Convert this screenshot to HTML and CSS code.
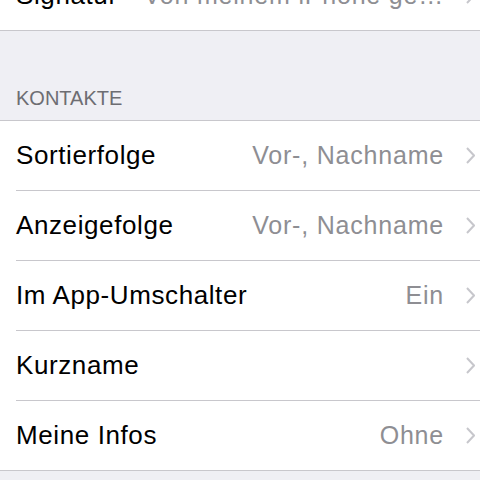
FILE: index.html
```html
<!DOCTYPE html>
<html lang="de">
<head>
  <meta charset="UTF-8">
  <title>Mail, Kontakte, Kalender</title>
  <meta name="viewport" content="width=device-width, initial-scale=1.0">
  <link rel="stylesheet" href="styles.css">
</head>
<body>
  <!-- Ende der Mail-Gruppe -->
  <div class="gruppe gruppe-oben">
    <div class="zelle">
      <div class="zelle-inhalt">
        <span class="titel">Signatur</span>
        <span class="wert">Von meinem iPhone ge…</span>
        <svg class="pfeil" width="9" height="17" viewBox="0 0 9 17"><polyline points="1,1 8,8.5 1,16" /></svg>
      </div>
    </div>
  </div>

  <div class="kopf">KONTAKTE</div>

  <div class="gruppe">
    <div class="zelle">
      <div class="zelle-inhalt">
        <span class="titel">Sortierfolge</span>
        <span class="wert">Vor-, Nachname</span>
        <svg class="pfeil" width="9" height="17" viewBox="0 0 9 17"><polyline points="1,1 8,8.5 1,16" /></svg>
      </div>
    </div>
    <div class="zelle">
      <div class="zelle-inhalt">
        <span class="titel">Anzeigefolge</span>
        <span class="wert">Vor-, Nachname</span>
        <svg class="pfeil" width="9" height="17" viewBox="0 0 9 17"><polyline points="1,1 8,8.5 1,16" /></svg>
      </div>
    </div>
    <div class="zelle">
      <div class="zelle-inhalt">
        <span class="titel">Im App-Umschalter</span>
        <span class="wert">Ein</span>
        <svg class="pfeil" width="9" height="17" viewBox="0 0 9 17"><polyline points="1,1 8,8.5 1,16" /></svg>
      </div>
    </div>
    <div class="zelle">
      <div class="zelle-inhalt">
        <span class="titel">Kurzname</span>
        <span class="wert"></span>
        <svg class="pfeil" width="9" height="17" viewBox="0 0 9 17"><polyline points="1,1 8,8.5 1,16" /></svg>
      </div>
    </div>
    <div class="zelle">
      <div class="zelle-inhalt">
        <span class="titel">Meine Infos</span>
        <span class="wert">Ohne</span>
        <svg class="pfeil" width="9" height="17" viewBox="0 0 9 17"><polyline points="1,1 8,8.5 1,16" /></svg>
      </div>
    </div>
  </div>
</body>
</html>
```

FILE: styles.css
```css
* {
  box-sizing: border-box;
  margin: 0;
  padding: 0;
}

body {
  font-family: 'Liberation Sans', Arial, sans-serif;
  background: #efeff4;
  color: #000;
  height: 480px;
  overflow: hidden;
}

.gruppe {
  background: #fff;
  border-top: 1px solid #c8c7cc;
  border-bottom: 1px solid #c8c7cc;
}

/* Zelle ist oben abgeschnitten */
.gruppe-oben {
  margin-top: -40px;
}

.kopf {
  height: 89px;
  padding: 55px 16px 10px;
  font-size: 20px;
  line-height: 24px;
  color: #6d6d72;
}

.zelle {
  padding-left: 16px;
}

.zelle-inhalt {
  display: flex;
  align-items: center;
  height: 70px;
  padding-right: 5px;
  border-bottom: 1px solid #c8c7cc;
  font-size: 25px;
  letter-spacing: 0.8px;
}

.zelle:last-child .zelle-inhalt {
  height: 69px;
  border-bottom: none;
}

.titel {
  flex: 1;
  font-size: 26px;
  letter-spacing: 0.6px;
  white-space: nowrap;
}

.wert {
  color: #8e8e93;
  white-space: nowrap;
}

.pfeil {
  margin-left: 22px;
  flex-shrink: 0;
}

.pfeil polyline {
  fill: none;
  stroke: #c7c7cc;
  stroke-width: 2;
}
```
